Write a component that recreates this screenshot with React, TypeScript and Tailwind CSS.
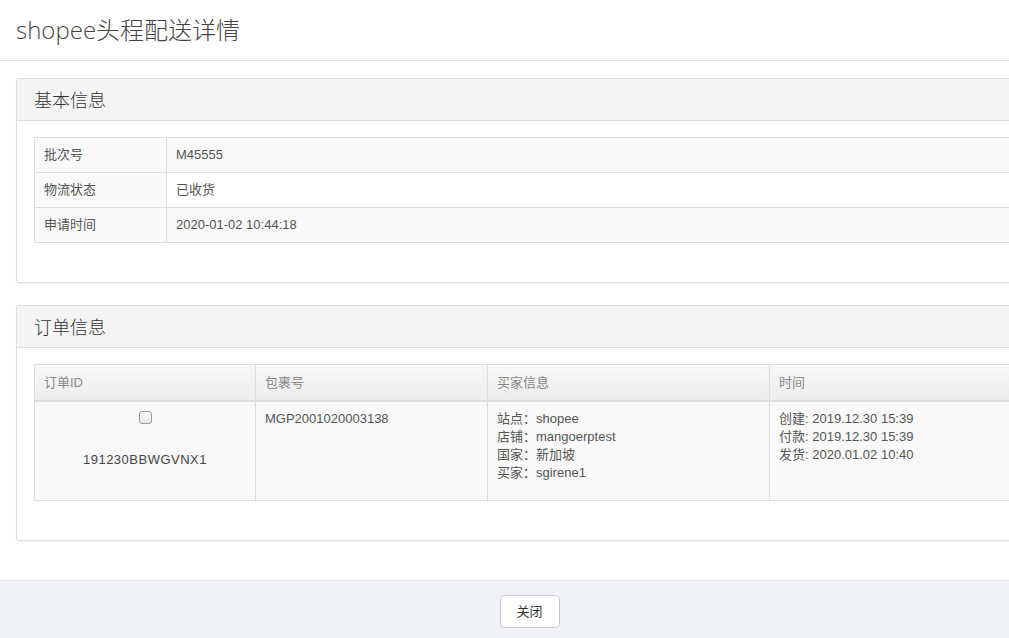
const basic = [
  ['批次号', 'M45555'],
  ['物流状态', '已收货'],
  ['申请时间', '2020-01-02 10:44:18'],
]

const font = { fontFamily: '"Liberation Sans", "Noto Sans CJK SC", sans-serif' }

function Panel({ title, children }: { title: string; children: React.ReactNode }) {
  return (
    <div className="mr-[-40px] rounded-[3px] border border-[#dddddd] bg-white shadow-[0_1px_1px_rgba(0,0,0,0.05)]">
      <div className="h-[42px] border-b border-[#dddddd] bg-[#f4f4f4] pl-[17px] flex items-center rounded-t-[3px]">
        <span className="text-[18px] text-[#333]" style={{ fontFamily: '"Noto Sans CJK SC", sans-serif', fontWeight: 300 }}>
          {title}
        </span>
      </div>
      <div className="px-[17px] pt-[16px] pb-[39px]">{children}</div>
    </div>
  )
}

export default function App() {
  return (
    <div className="w-full h-[638px] overflow-hidden bg-white flex flex-col" style={font}>
      <div className="h-[61px] border-b border-[#e5e5e5] pl-4 flex items-center">
        <h1 className="text-[24px] text-[#444]" style={{ fontFamily: '"Open Sans", "Noto Sans CJK SC", sans-serif', fontWeight: 300 }}>
          shopee头程配送详情
        </h1>
      </div>

      <div className="flex-1 pl-4 pt-[17px] flex flex-col gap-[22px]">
        <Panel title="基本信息">
          <table className="w-full border-collapse text-[13px] text-[#555]">
            <tbody>
              {basic.map(([k, v], i) => (
                <tr key={k} className={i % 2 === 0 ? 'bg-[#f9f9f9]' : 'bg-white'}>
                  <td className="w-[132px] h-[35px] border border-[#dddddd] px-[9px] bg-[#f9f9f9]">{k}</td>
                  <td className="h-[35px] border border-[#dddddd] px-[9px]">{v}</td>
                </tr>
              ))}
            </tbody>
          </table>
        </Panel>

        <Panel title="订单信息">
          <table className="w-full border-collapse text-[13px] text-[#555]">
            <thead>
              <tr className="bg-gradient-to-b from-[#f8f8f8] to-[#ececec] text-[#888]">
                <th className="w-[221px] h-[36px] border border-[#dddddd] border-b-2 px-[9px] text-left font-normal">订单ID</th>
                <th className="w-[232px] border border-[#dddddd] border-b-2 px-[9px] text-left font-normal">包裹号</th>
                <th className="w-[282px] border border-[#dddddd] border-b-2 px-[9px] text-left font-normal">买家信息</th>
                <th className="border border-[#dddddd] border-b-2 px-[9px] text-left font-normal">时间</th>
              </tr>
            </thead>
            <tbody>
              <tr className="bg-[#f9f9f9] align-top leading-[18px]">
                <td className="h-[100px] border border-[#dddddd] px-[9px] pt-[8px] text-center">
                  <div className="flex justify-center pt-[1px]">
                    <span className="block w-[13px] h-[13px] rounded-[3px] border border-[#999] bg-gradient-to-b from-white to-[#e6e6e6]" />
                  </div>
                  <div className="mt-[27px] text-[#444] tracking-[0.5px]">191230BBWGVNX1</div>
                </td>
                <td className="border border-[#dddddd] px-[9px] pt-[8px]">MGP2001020003138</td>
                <td className="border border-[#dddddd] px-[9px] pt-[8px]">
                  <div>站点：shopee</div>
                  <div>店铺：mangoerptest</div>
                  <div>国家：新加坡</div>
                  <div>买家：sgirene1</div>
                </td>
                <td className="border border-[#dddddd] px-[9px] pt-[8px]">
                  <div>创建: 2019.12.30 15:39</div>
                  <div>付款: 2019.12.30 15:39</div>
                  <div>发货: 2020.01.02 10:40</div>
                </td>
              </tr>
            </tbody>
          </table>
        </Panel>
      </div>

      <div className="h-[58px] border-t border-[#e5e5e5] bg-[#eff2f7] flex items-center justify-center">
        <button className="w-[60px] h-[33px] mt-[4px] rounded-[4px] border border-[#cccccc] bg-white text-[13px] text-[#333] ml-[50px]">
          关闭
        </button>
      </div>
    </div>
  )
}
